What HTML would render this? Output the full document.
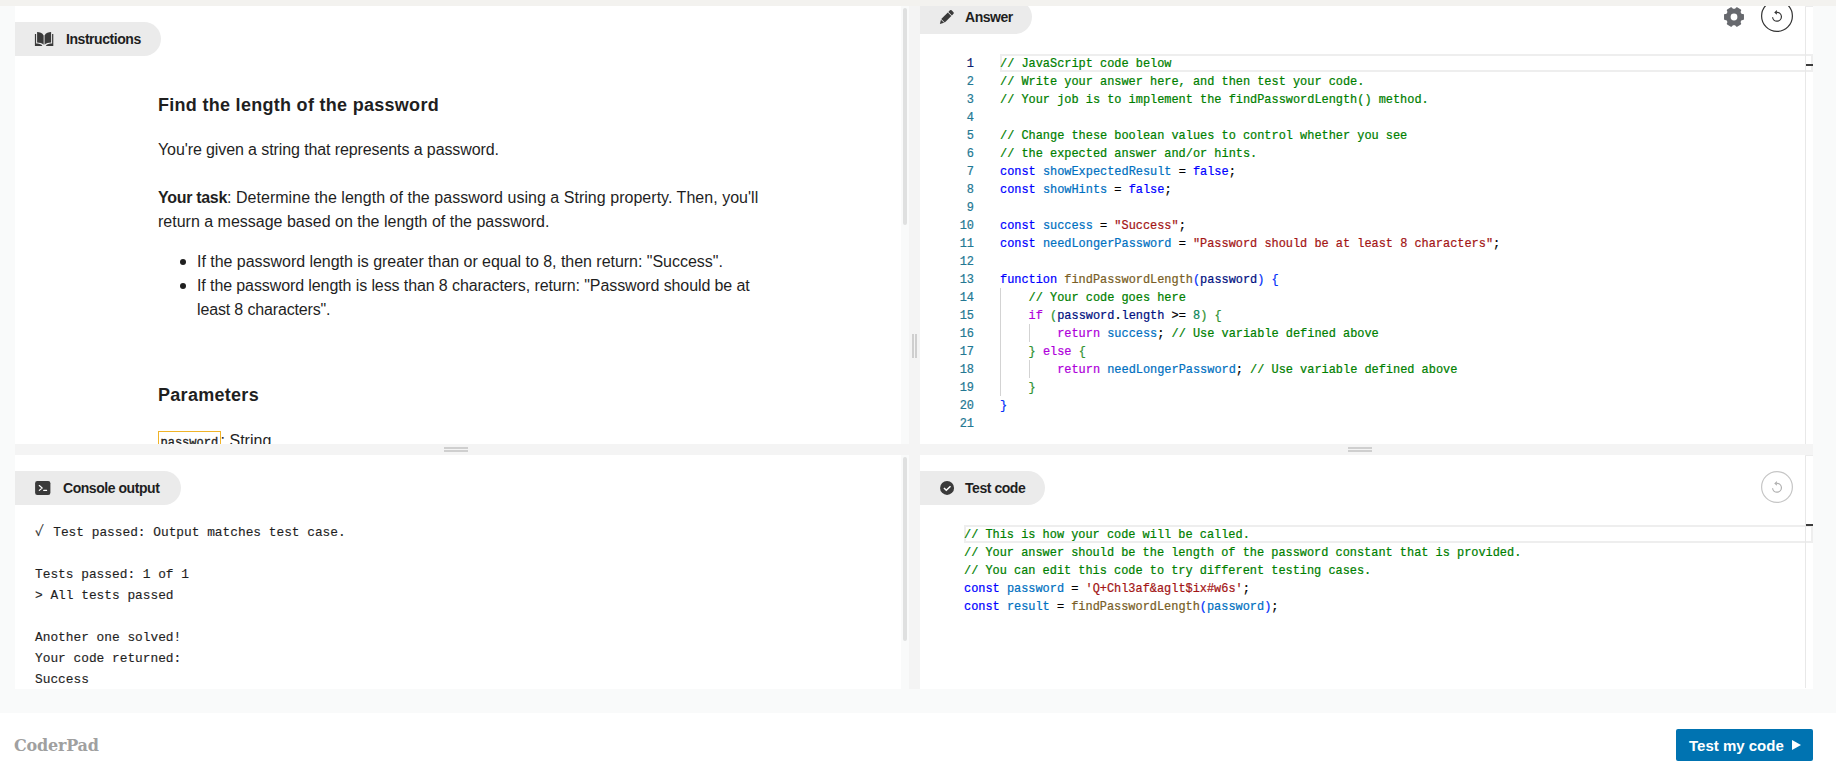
<!DOCTYPE html>
<html lang="en">
<head>
<meta charset="utf-8">
<title>Find the length of the password</title>
<style>
*{box-sizing:border-box;margin:0;padding:0}
html,body{width:1836px;height:773px;overflow:hidden;background:#f9fafa}
body{position:relative;font-family:"Liberation Sans",sans-serif;color:#1f1f1f}
.abs{position:absolute}
#topbar{left:0;top:0;width:1836px;height:6px;background:#f3f2ef;z-index:20}
.panel{position:absolute;background:#fff;overflow:hidden}
#p-instr{left:15px;top:6px;width:886px;height:438px}
#p-console{left:15px;top:455px;width:886px;height:234px}
#p-answer{left:920px;top:6px;width:893px;height:438px}
#p-test{left:920px;top:455px;width:893px;height:234px}
.gut{position:absolute;background:#f4f4f4}
.grip{position:absolute;background:#cfcfcf}
.pill{position:absolute;left:0;height:34px;background:#ebebeb;border-radius:0 17px 17px 0;font-weight:bold;font-size:14px;line-height:34px;white-space:nowrap;color:#1f1f1f;letter-spacing:-0.45px}
.pill span{position:absolute;top:0}
.pill svg{position:absolute}
.thumb{position:absolute;width:4px;background:#dfe0e0;border-radius:2px}
.mono{font-family:"Liberation Mono","DejaVu Sans Mono",monospace}
#footer{left:0;top:713px;width:1836px;height:60px;background:#fff}

/* instructions text */
.md{position:absolute;left:143px;font-size:16px;line-height:24px;color:#1f1f1f;white-space:nowrap}
.md b{font-weight:bold;letter-spacing:-0.3px}
h2.md{font-size:18px;font-weight:bold;line-height:24px;letter-spacing:0.29px}
.dot{position:absolute;width:6px;height:6px;border-radius:50%;background:#1f1f1f;left:165px}
.codebox{display:inline-block;border:1px solid #f0b429;font-family:"Liberation Mono",monospace;font-size:12px;line-height:14px;padding:4px 1.5px 0 1.5px;height:20px;margin-top:2px;vertical-align:top;font-weight:normal;-webkit-text-stroke:0.35px #1f1f1f;color:#1f1f1f}

/* console */
.con{position:absolute;left:20px;top:67px;font-family:"Liberation Mono","DejaVu Sans Mono",monospace;font-size:12.83px;line-height:21px;white-space:pre;color:#1f1f1f;-webkit-text-stroke-width:0.15px}

/* editor */
.code{position:absolute;font-family:"Liberation Mono",monospace;font-size:11.91px;line-height:18px;color:#000;-webkit-text-stroke-width:0.22px}
.ln{height:18px;white-space:pre}
.nums{position:absolute;font-family:"Liberation Mono",monospace;font-size:11.91px;line-height:18px;text-align:right;color:#237893;width:40px;-webkit-text-stroke-width:0.2px}
.num{height:18px}
.num.act{color:#0b216f}
.c{color:#008000}.k{color:#0000ff}.v{color:#0070c1}.s{color:#a31515}.f{color:#795e26}.p{color:#001080}.m{color:#af00db}.n{color:#098658}
.b1{color:#0431fa}.b2{color:#319331}.b3{color:#7b3814}
.actline{position:absolute;height:18px;border:2px solid #eee}
.vline{position:absolute;width:1px;background:#e8e8e8}
.marker{position:absolute;height:2px;width:7px;background:#3c3c3c}
.guide{position:absolute;width:1px;background:#d3d3d3}
.circ{position:absolute;width:32px;height:32px;border-radius:50%;border:1px solid #333}
#btn{left:1676px;top:729px;width:137px;height:32px;background:#0073b1;border-radius:2px;color:#fff;font-weight:bold;font-size:15px;line-height:32px;white-space:nowrap}
#logo{left:14px;top:734px;font-family:"DejaVu Serif","Liberation Serif",serif;font-weight:bold;font-size:16px;line-height:24px;color:#a0a0a0;letter-spacing:-0.2px}
</style>
</head>
<body>
<div id="topbar" class="abs"></div>

<!-- gutters -->
<div class="gut" style="left:909px;top:6px;width:11px;height:683px"></div>
<div class="gut" style="left:15px;top:444px;width:1798px;height:11px"></div>
<!-- grips -->
<div class="grip" style="left:444px;top:447px;width:24px;height:2px"></div>
<div class="grip" style="left:444px;top:450px;width:24px;height:2px"></div>
<div class="grip" style="left:1348px;top:447px;width:24px;height:2px"></div>
<div class="grip" style="left:1348px;top:450px;width:24px;height:2px"></div>
<div class="grip" style="left:912px;top:334px;width:2px;height:24px"></div>
<div class="grip" style="left:915px;top:334px;width:2px;height:24px"></div>
<!-- scrollbar thumbs -->
<div class="thumb" style="left:903px;top:8px;height:217px"></div>
<div class="thumb" style="left:903px;top:457px;height:184px"></div>

<!-- INSTRUCTIONS -->
<div id="p-instr" class="panel">
  <div class="pill" style="top:16px;width:146px">
    <svg style="left:19px;top:10px" width="21" height="15" viewBox="0 0 21 15"><path fill="#3a3a3a" d="M3.100.1C5.500.1 8.500 1 9.650 3.400V12.700C8.500 11.200 5.500 10.500 3.100 10.500ZM17.100.1C14.700.1 11.700 1 10.550 3.400V12.700C11.700 11.200 14.700 10.500 17.100 10.500ZM.9 2.100H2.100V11.600C4.500 11.600 6.800 12.200 8.400 13.400L7.600 14H.9ZM19.300 2.100H18.100V11.600C15.700 11.600 13.400 12.200 11.800 13.400L12.600 14H19.300Z"/></svg>
    <span style="left:51px">Instructions</span>
  </div>
  <h2 class="md" style="top:87px">Find the length of the password</h2>
  <div class="md" style="top:132px;letter-spacing:-0.1px">You're given a string that represents a password.</div>
  <div class="md" style="top:180px;letter-spacing:0.03px"><b>Your task</b>: Determine the length of the password using a String property. Then, you'll</div>
  <div class="md" style="top:204px">return a message based on the length of the password.</div>
  <div class="dot" style="top:253px"></div>
  <div class="md" style="top:244px;left:182px;letter-spacing:-0.03px">If the password length is greater than or equal to 8, then return: "Success".</div>
  <div class="dot" style="top:277px"></div>
  <div class="md" style="top:268px;left:182px;letter-spacing:-0.1px">If the password length is less than 8 characters, return: "Password should be at</div>
  <div class="md" style="top:292px;left:182px;letter-spacing:-0.15px">least 8 characters".</div>
  <h2 class="md" style="top:377px">Parameters</h2>
  <div class="md" style="top:423px"><span class="codebox">password</span>: String</div>
</div>

<!-- CONSOLE -->
<div id="p-console" class="panel">
  <div class="pill" style="top:16px;width:166px">
    <svg style="left:19px;top:9px" width="18" height="16" viewBox="0 0 18 16"><rect x="1.100" y="1.100" width="15.300" height="13.800" rx="2.200" fill="#3a3a3a"/><path d="M5.300 5.500l2.900 2.500-2.900 2.400M9.700 10.400h2.900" stroke="#fff" stroke-width="1.150" stroke-linecap="round" stroke-linejoin="round" fill="none"/></svg>
    <span style="left:48px">Console output</span>
  </div>
  <div class="con"><span style="display:inline-block;width:18.200px;font-family:'Noto Serif CJK SC','DejaVu Sans',serif;font-size:13.5px;line-height:14px;-webkit-text-stroke-width:0.3px">✓</span>Test passed: Output matches test case.

Tests passed: 1 of 1
&gt; All tests passed

Another one solved!
Your code returned:
Success</div>
</div>

<!-- ANSWER -->
<div id="p-answer" class="panel">
  <div class="pill" style="top:-6px;width:112px">
    <svg style="left:0;top:0" width="40" height="34" viewBox="0 0 40 34"><g transform="translate(19.900 23.900) rotate(-45)" fill="#3a3a3a"><path d="M0 0L3.700-2.200V2.200Z"/><rect x="4.400" y="-2.500" width="9.300" height="5"/><path d="M14.500-2.500h2.200a1.200 1.200 0 0 1 1.200 1.200v2.600a1.200 1.200 0 0 1-1.200 1.200H14.500Z"/></g></svg>
    <span style="left:45px">Answer</span>
  </div>
  <div class="actline" style="left:80px;top:48px;width:813px"></div>
  <div class="vline" style="left:885px;top:0;height:438px"></div>
  <div class="abs" style="left:885px;top:0;width:8px;height:1px;background:#ececec"></div>
  <div class="marker" style="left:886px;top:58px"></div>
  <div class="guide" style="left:80px;top:282px;height:108px"></div>
  <div class="guide" style="left:109px;top:318px;height:18px"></div>
  <div class="guide" style="left:109px;top:354px;height:18px"></div>
  <div class="nums" style="left:14px;top:49px">
<div class="num act">1</div>
<div class="num">2</div>
<div class="num">3</div>
<div class="num">4</div>
<div class="num">5</div>
<div class="num">6</div>
<div class="num">7</div>
<div class="num">8</div>
<div class="num">9</div>
<div class="num">10</div>
<div class="num">11</div>
<div class="num">12</div>
<div class="num">13</div>
<div class="num">14</div>
<div class="num">15</div>
<div class="num">16</div>
<div class="num">17</div>
<div class="num">18</div>
<div class="num">19</div>
<div class="num">20</div>
<div class="num">21</div>
  </div>
  <div class="code" style="left:80px;top:49px">
<div class="ln"><span class="c">// JavaScript code below</span></div>
<div class="ln"><span class="c">// Write your answer here, and then test your code.</span></div>
<div class="ln"><span class="c">// Your job is to implement the findPasswordLength() method.</span></div>
<div class="ln"></div>
<div class="ln"><span class="c">// Change these boolean values to control whether you see</span></div>
<div class="ln"><span class="c">// the expected answer and/or hints.</span></div>
<div class="ln"><span class="k">const</span> <span class="v">showExpectedResult</span> = <span class="k">false</span>;</div>
<div class="ln"><span class="k">const</span> <span class="v">showHints</span> = <span class="k">false</span>;</div>
<div class="ln"></div>
<div class="ln"><span class="k">const</span> <span class="v">success</span> = <span class="s">"Success"</span>;</div>
<div class="ln"><span class="k">const</span> <span class="v">needLongerPassword</span> = <span class="s">"Password should be at least 8 characters"</span>;</div>
<div class="ln"></div>
<div class="ln"><span class="k">function</span> <span class="f">findPasswordLength</span><span class="b1">(</span><span class="p">password</span><span class="b1">)</span> <span class="b1">{</span></div>
<div class="ln">    <span class="c">// Your code goes here</span></div>
<div class="ln">    <span class="m">if</span> <span class="b2">(</span><span class="p">password</span>.<span class="p">length</span> &gt;= <span class="n">8</span><span class="b2">)</span> <span class="b2">{</span></div>
<div class="ln">        <span class="m">return</span> <span class="v">success</span>; <span class="c">// Use variable defined above</span></div>
<div class="ln">    <span class="b2">}</span> <span class="m">else</span> <span class="b2">{</span></div>
<div class="ln">        <span class="m">return</span> <span class="v">needLongerPassword</span>; <span class="c">// Use variable defined above</span></div>
<div class="ln">    <span class="b2">}</span></div>
<div class="ln"><span class="b1">}</span></div>
<div class="ln"></div>
  </div>
  <!-- gear -->
  <svg class="abs" style="left:802px;top:-1px" width="24" height="24" viewBox="-12 -12 24 24"><path d="M7.14 -2.46L9.16 -2.11L9.16 2.11L7.14 2.46L5.70 4.95L6.41 6.87L2.75 8.99L1.44 7.41L-1.44 7.41L-2.75 8.99L-6.41 6.87L-5.70 4.95L-7.14 2.46L-9.16 2.11L-9.16 -2.11L-7.14 -2.46L-5.70 -4.95L-6.41 -6.87L-2.75 -8.99L-1.44 -7.41L1.44 -7.41L2.75 -8.99L6.41 -6.87L5.70 -4.95Z" fill="#67696e" stroke="#67696e" stroke-width="1.600" stroke-linejoin="round"/><circle r="3.400" fill="#fff"/></svg>
  <svg class="abs" style="left:841px;top:-6px" width="32" height="32" viewBox="0 0 32 32"><circle cx="16" cy="16" r="15.400" fill="none" stroke="#333" stroke-width="1.200"/><path d="M16 12.300A4.450 4.450 0 1 1 11.550 17.300" fill="none" stroke="#333" stroke-width="1.200"/><path d="M13.200 12.400L15.900 9.900V14.700Z" fill="#333"/></svg>
</div>

<!-- TEST CODE -->
<div id="p-test" class="panel">
  <div class="pill" style="top:16px;width:125px">
    <svg style="left:0;top:0" width="40" height="34" viewBox="0 0 40 34"><circle cx="27.070" cy="16.900" r="7" fill="#3a3a3a"/><path d="M23.950 16.970l2.350 2.350 4.200-4.050" stroke="#fff" stroke-width="1.500" fill="none"/></svg>
    <span style="left:45px">Test code</span>
  </div>
  <div class="actline" style="left:44px;top:70px;width:849px"></div>
  <div class="vline" style="left:885px;top:0;height:233px"></div>
  <div class="abs" style="left:885px;top:0;width:8px;height:1px;background:#ececec"></div>
  <div class="marker" style="left:886px;top:69px"></div>
  <div class="code" style="left:44px;top:71px">
<div class="ln"><span class="c">// This is how your code will be called.</span></div>
<div class="ln"><span class="c">// Your answer should be the length of the password constant that is provided.</span></div>
<div class="ln"><span class="c">// You can edit this code to try different testing cases.</span></div>
<div class="ln"><span class="k">const</span> <span class="v">password</span> = <span class="s">'Q+Chl3af&amp;aglt$ix#w6s'</span>;</div>
<div class="ln"><span class="k">const</span> <span class="v">result</span> = <span class="f">findPasswordLength</span><span class="b1">(</span><span class="v">password</span><span class="b1">)</span>;</div>
  </div>
  <svg class="abs" style="left:841px;top:16px" width="32" height="32" viewBox="0 0 32 32"><circle cx="16" cy="16" r="15.400" fill="none" stroke="#c6c6c6" stroke-width="1.200"/><path d="M16 12.300A4.450 4.450 0 1 1 11.550 17.300" fill="none" stroke="#b0b0b0" stroke-width="1.200"/><path d="M13.200 12.400L15.900 9.900V14.700Z" fill="#b0b0b0"/></svg>
</div>

<!-- FOOTER -->
<div id="footer" class="abs"></div>
<div id="logo" class="abs">CoderPad</div>
<div id="btn" class="abs"><span class="abs" style="left:13px;top:1px;letter-spacing:0">Test my code</span>
<svg class="abs" style="left:116px;top:11px" width="9" height="10" viewBox="0 0 9 10"><path d="M0 0l9 5-9 5z" fill="#fff"/></svg></div>
</body>
</html>
